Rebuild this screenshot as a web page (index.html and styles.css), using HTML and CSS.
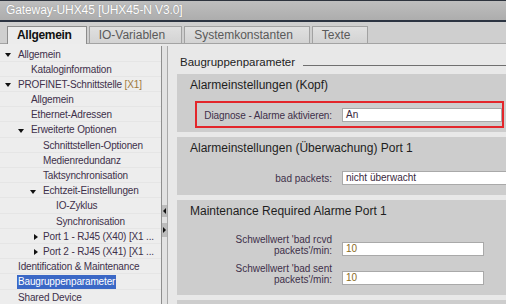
FILE: index.html
```html
<!DOCTYPE html>
<html lang="de">
<head>
  <meta charset="UTF-8">
  <title>Gateway-UHX45 [UHX45-N V3.0]</title>
  <link rel="stylesheet" href="styles.css">
</head>
<body>
  <div class="titlebar">Gateway-UHX45 [UHX45-N V3.0]</div>

  <div class="tabs">
    <div class="tab active">Allgemein</div>
    <div class="tab">IO-Variablen</div>
    <div class="tab">Systemkonstanten</div>
    <div class="tab">Texte</div>
  </div>

  <div class="main">
    <ul class="tree">
      <li class="l0 open">Allgemein</li>
      <li class="l1">Kataloginformation</li>
      <li class="l0 open">PROFINET-Schnittstelle <span class="slot">[X1]</span></li>
      <li class="l1">Allgemein</li>
      <li class="l1">Ethernet-Adressen</li>
      <li class="l1 open">Erweiterte Optionen</li>
      <li class="l2">Schnittstellen-Optionen</li>
      <li class="l2">Medienredundanz</li>
      <li class="l2">Taktsynchronisation</li>
      <li class="l2 open">Echtzeit-Einstellungen</li>
      <li class="l3">IO-Zyklus</li>
      <li class="l3">Synchronisation</li>
      <li class="l2 closed">Port 1 - RJ45 (X40) [X1 ...</li>
      <li class="l2 closed">Port 2 - RJ45 (X41) [X1 ...</li>
      <li class="l0">Identification &amp; Maintenance</li>
      <li class="l0 selected"><span>Baugruppenparameter</span></li>
      <li class="l0">Shared Device</li>
    </ul>

    <div class="splitter">
      <span class="split-btn collapse"></span>
      <span class="split-btn expand"></span>
    </div>

    <div class="content">
      <div class="page-title">Baugruppenparameter</div>

      <div class="group">
        <div class="group-title">Alarmeinstellungen (Kopf)</div>
        <div class="marked row">
          <span class="label">Diagnose - Alarme aktivieren:</span>
          <span class="field fill">An</span>
        </div>
      </div>

      <div class="group">
        <div class="group-title">Alarmeinstellungen (Überwachung) Port 1</div>
        <div class="rows">
          <div class="row">
            <span class="label">bad packets:</span>
            <span class="field select">nicht überwacht</span>
          </div>
        </div>
      </div>

      <div class="group">
        <div class="group-title">Maintenance Required Alarme Port 1</div>
        <div class="rows">
          <div class="row tall">
            <span class="label">Schwellwert 'bad rcvd packets'/min:</span>
            <span class="field number">10</span>
          </div>
          <div class="row tall">
            <span class="label">Schwellwert 'bad sent packets'/min:</span>
            <span class="field number">10</span>
          </div>
        </div>
      </div>

      <div class="group"></div>
    </div>
  </div>
</body>
</html>
```

FILE: styles.css
```css
body {
  margin: 0;
  width: 506px;
  height: 304px;
  overflow: hidden;
  font-family: 'Liberation Sans', Arial, sans-serif;
  background-color: #e8e8e8;
}
.titlebar {
  height: 19px;
  padding-left: 6px;
  border-top: 1px solid #2d333d;
  border-bottom: 2px solid #2c3442;
  background: linear-gradient(#bebebe, #adadad);
  color: #fff;
  font-size: 12px;
  line-height: 19px;
  letter-spacing: -0.1px;
  text-shadow: 0 0 1px rgba(80, 80, 80, 0.5);
}
.tabs {
  display: flex;
  align-items: flex-end;
  gap: 2px;
  height: 21px;
  padding-left: 7px;
  background-color: #cfcfcf;
  border-bottom: 1px solid #a3a3a3;
}
.tab {
  height: 16px;
  padding: 0 16px 0 9px;
  border: 1px solid #a2a2a2;
  border-bottom: none;
  background: linear-gradient(#e0e0e0, #d3d3d3);
  color: #5a5a5a;
  font-size: 12px;
  line-height: 16px;
}
.tab.active {
  height: 17px;
  margin-bottom: -1px;
  padding-right: 14px;
  border-color: #8c8c8c;
  background: #ececec;
  color: #111;
  font-weight: bold;
  letter-spacing: -0.3px;
}
.main {
  display: flex;
  height: 260px;
}
.tree {
  width: 161px;
  margin: 0;
  padding: 2.5px 0 0;
  list-style: none;
  background-color: #ededed;
  color: #40304a;
  font-size: 10px;
  letter-spacing: -0.15px;
}
.tree li {
  box-sizing: border-box;
  height: 15.2px;
  line-height: 15px;
  white-space: nowrap;
  border-bottom: 1px solid #e5e5e5;
}
.tree .l0 { padding-left: 18px; }
.tree .l1 { padding-left: 31px; }
.tree .l2 { padding-left: 43px; }
.tree .l3 { padding-left: 56px; }
.tree .open::before {
  content: "";
  display: inline-block;
  margin: 0 7px 0 -13px;
  border-left: 3px solid transparent;
  border-right: 3px solid transparent;
  border-top: 4px solid #111;
  vertical-align: middle;
}
.tree .closed::before {
  content: "";
  display: inline-block;
  margin: 0 5px 0 -9px;
  border-top: 3.5px solid transparent;
  border-bottom: 3.5px solid transparent;
  border-left: 4px solid #111;
  vertical-align: middle;
}
.tree .slot {
  color: #a07a3c;
}
.tree .selected span {
  display: inline-block;
  margin-left: -1px;
  padding: 0 1px;
  line-height: 14px;
  background-color: #3b68c6;
  color: #fff;
}
.splitter {
  box-sizing: border-box;
  width: 7px;
  margin-top: 2px;
  padding-top: 159px;
  border-left: 1px solid #8e8e8e;
  border-right: 1px solid #a9a9a9;
  background-color: #e2e2e2;
}
.split-btn {
  position: relative;
  display: block;
  height: 12px;
  background-color: #bcbcbc;
}
.split-btn.expand {
  height: 14px;
  margin-top: 6px;
}
.split-btn::after {
  content: "";
  position: absolute;
  top: 50%;
  left: 1px;
  margin-top: -3px;
  border-top: 3px solid transparent;
  border-bottom: 3px solid transparent;
}
.split-btn.collapse::after {
  border-right: 3px solid #111;
}
.split-btn.expand::after {
  border-left: 3px solid #111;
}
.content {
  flex: 1;
  overflow: hidden;
  padding: 10px 0 0 9px;
}
.page-title {
  display: flex;
  margin-bottom: 4px;
  padding-left: 3px;
  color: #222;
  font-size: 11.5px;
  line-height: 16px;
}
.page-title::after {
  content: "";
  flex: 1;
  align-self: flex-end;
  margin: 0 0 4px 8px;
  border-bottom: 1px solid #6f6f6f;
}
.group {
  min-height: 20px;
  margin-bottom: 5px;
  padding: 2px 0 4px;
  background-color: #cdcdcd;
}
.group-title {
  padding-left: 13px;
  color: #1e1e1e;
  font-size: 12px;
  line-height: 18px;
}
.rows {
  display: flex;
  flex-direction: column;
  gap: 7px;
  padding: 14px 0 6px 26px;
}
.row {
  display: flex;
  align-items: center;
}
.row.tall {
  align-items: flex-end;
}
.marked {
  margin: 7px 2px 0 18px;
  padding: 5px 0 4px 6px;
  border: 2px solid #e3262b;
}
.marked .label {
  white-space: nowrap;
  letter-spacing: -0.1px;
}
.label {
  width: 129px;
  flex-shrink: 0;
  margin-right: 10px;
  text-align: right;
  color: #40304a;
  font-size: 10px;
  line-height: 11px;
}
.field {
  box-sizing: border-box;
  flex-shrink: 0;
  height: 14px;
  padding-left: 3px;
  border: 1px solid #a9a9a9;
  background-color: #fff;
  color: #3a2a40;
  font-size: 10px;
  line-height: 12px;
}
.field.fill {
  flex: 1;
}
.field.select {
  width: 180px;
}
.field.number {
  width: 142px;
  color: #8b6c1e;
}
```
